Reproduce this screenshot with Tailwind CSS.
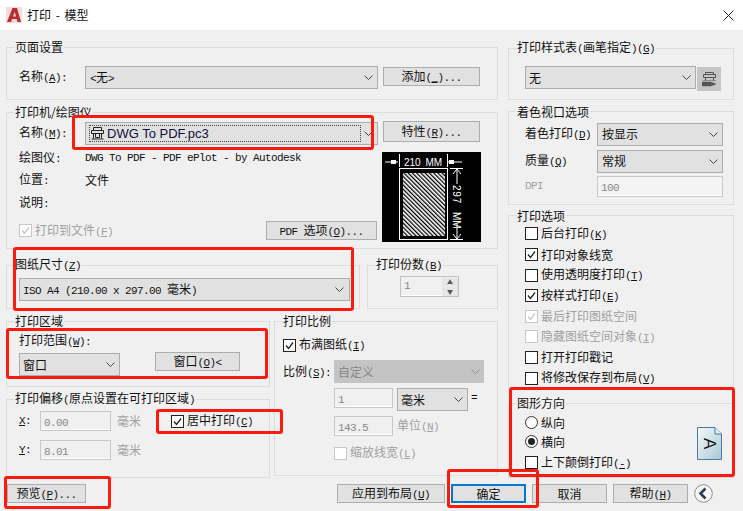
<!DOCTYPE html>
<html lang="zh-CN">
<head>
  <meta charset="UTF-8">
  <title>打印 - 模型</title>
  <script src="https://cdn.jsdelivr.net/npm/@tailwindcss/browser@4"></script>
</head>
<body class="relative w-[743px] h-[511px] overflow-hidden bg-[#f0f0f0] text-[12px] leading-[16px] text-[#111] font-['Noto_Sans_CJK_SC',sans-serif] [&_kbd]:text-[11px] [&_kbd]:tracking-[-0.6px] [&_kbd]:font-['Liberation_Mono',monospace] [&_legend]:px-[1px] [&_legend]:ml-[7px] [&_fieldset]:border [&_fieldset]:border-[#dcdcdc]">
  <svg class="hidden">
    <symbol id="chev" viewBox="0 0 9 5"><path d="M.5.5 4.500 4.500 8.500.5" fill="none" stroke="#444"/></symbol>
    <symbol id="box" viewBox="0 0 13 13"><rect x=".5" y=".5" width="12" height="12" fill="#fff" stroke="currentColor"/></symbol>
    <symbol id="chk" viewBox="0 0 13 13"><rect x=".5" y=".5" width="12" height="12" fill="#fff" stroke="currentColor"/><path d="M3 6.500 5.500 9.500 10 3.500" fill="none" stroke="currentColor" stroke-width="1.300"/></symbol>
    <symbol id="prn" viewBox="0 0 13 13"><path d="M2.500.5h8v3h-8zM.5 3.500h12v3H.5zM2.500 6.500v5M10.500 6.500v5M4.500 6.500v4h4v-4M.5 12h12" fill="none" stroke="currentColor"/></symbol>
    <symbol id="pen" viewBox="0 0 15 15"><path d="M3.500.5h8v2h-8zM1.500 2.500h12v3h-12zM3.500 5.500v3M11.500 5.500v3" fill="none" stroke="currentColor"/><path d="M0 10h9l5 2-5 2H0zM1 8.500h13" fill="currentColor" stroke="currentColor" stroke-width=".5"/></symbol>
  </svg>

  <header class="flex items-center h-[30px] bg-white">
    <svg class="ml-[6px] w-[16px] h-[16px]" viewBox="0 0 16 16">
      <rect width="16" height="16" fill="#f3dcd9"/>
      <path d="M1 15 6.500 1H11L15 15H11.500L10.800 12H6L5 15ZM7 9.500H10L8.800 5Z" fill="#b92c33"/>
    </svg>
    <span class="ml-[5px]">打印<span class="mx-[2px]"> - </span>模型</span>
    <svg class="ml-auto mr-[9px] w-[11px] h-[11px]" viewBox="0 0 11 11"><path d="M.5.5 10.500 10.500M10.500.5.500 10.500" stroke="#222"/></svg>
  </header>

  <main class="h-[481px] pt-[9px] pl-[6px]">
    <div class="flex h-[439px]">
      <div class="w-[492px] flex flex-col">
        <fieldset class="h-[61px]">
          <legend>页面设置</legend>
          <div class="flex pl-[12px] pr-[16px] pt-[11px]">
            <span class="w-[66px] pt-[2px]">名称<kbd>(<u>A</u>):</kbd></span>
            <div class="w-[293px] h-[23px] flex items-center justify-between pl-[4px] pr-[4px] bg-[#e1e1e1] border border-[#adadad]"><span><kbd>&lt;</kbd>无<kbd>&gt;</kbd></span><svg class="w-[9px] h-[5px]"><use href="#chev"/></svg></div>
            <button class="ml-[5px] mt-[1px] w-[97px] h-[19px] bg-[#e1e1e1] border border-[#adadad]">添加<kbd>(<u>_</u>)...</kbd></button>
          </div>
        </fieldset>

        <fieldset class="mt-[4px] h-[145px]">
          <legend>打印机/绘图仪</legend>
          <div class="flex pl-[12px] pr-[16px] pt-[2px]">
            <span class="w-[66px] pt-[2px]">名称<kbd>(<u>M</u>):</kbd></span>
            <div class="w-[293px] h-[23px] flex items-center justify-between pl-[3px] pr-[4px] bg-[#e1e1e1] border border-[#adadad]">
              <span class="flex items-center w-[272px] h-[17px] border border-dotted border-[#444]">
                <svg class="ml-[1px] w-[13px] h-[13px] text-[#222]"><use href="#prn"/></svg>
                <span class="ml-[3px] text-[13px] text-[#10103a] font-['Liberation_Sans']">DWG To PDF.pc3</span>
              </span>
              <svg class="w-[9px] h-[5px]"><use href="#chev"/></svg>
            </div>
            <button class="ml-[5px] -mt-[1px] w-[97px] h-[21px] bg-[#e1e1e1] border border-[#adadad]">特性<kbd>(<u>R</u>)...</kbd></button>
          </div>
          <div class="flex pl-[12px]">
            <div class="w-[358px] pt-[2px]">
              <div class="flex h-[22px] items-center"><span class="w-[66px]">绘图仪<kbd>:</kbd></span><kbd>DWG To PDF - PDF ePlot - by Autodesk</kbd></div>
              <div class="flex h-[22px] items-center"><span class="w-[66px]">位置<kbd>:</kbd></span>文件</div>
              <div class="flex h-[23px] items-center"><span class="w-[66px]">说明<kbd>:</kbd></span></div>
              <div class="flex items-center justify-between mt-[7px] text-[#a0a0a0]">
                <span class="flex items-center gap-[3px]"><svg class="w-[13px] h-[13px] text-[#c8c8c8]"><use href="#chk"/></svg><span>打印到文件<kbd>(<u>F</u>)</kbd></span></span>
                <button class="w-[111px] h-[19px] text-[#111] bg-[#e1e1e1] border border-[#adadad]"><kbd>PDF </kbd>选项<kbd>(<u>O</u>)...</kbd></button>
              </div>
            </div>
            <svg class="ml-[5px] mt-[7px] w-[99px] h-[90px] bg-black" viewBox="0 0 99 90">
              <defs><pattern id="hatch" width="3" height="3" patternUnits="userSpaceOnUse" patternTransform="rotate(45)"><rect width="3" height="1.700" fill="#fff"/></pattern></defs>
              <g stroke="#fff" fill="none">
                <path d="M3 10H16M17.500 2V15M65.500 2V15M66 10H80M68 16.500H81M68 87.500H81M75 17V32M75 72V87"/>
                <rect x="17.500" y="16.500" width="48" height="71"/>
                <path d="M71 22 75 17 79 22M71 82 75 87 79 82"/>
              </g>
              <rect x="21" y="21" width="42" height="63" fill="url(#hatch)"/>
              <path d="M9 8h5v4H9ZM67 8h5v4H67Z" fill="#fff"/>
              <text x="22" y="14" font-size="10" word-spacing="2" fill="#fff" font-family="Liberation Sans">210 MM</text>
              <text transform="translate(71 33) rotate(90)" font-size="10" letter-spacing=".8" fill="#fff" font-family="Liberation Sans">297</text>
              <text transform="translate(71 60) rotate(90)" font-size="10" fill="#fff" font-family="Liberation Sans">MM</text>
            </svg>
          </div>
        </fieldset>

        <div class="flex mt-[7px] gap-[7px]">
          <fieldset class="w-[354px] h-[53px]">
            <legend>图纸尺寸<kbd>(<u>Z</u>)</kbd></legend>
            <div class="pl-[12px] pr-[9px] pt-[4px]">
              <div class="h-[23px] flex items-center justify-between pl-[3px] pr-[5px] bg-[#e1e1e1] border border-[#adadad]"><span><kbd>ISO A4 (210.00 x 297.00 </kbd>毫米<kbd>)</kbd></span><svg class="w-[9px] h-[5px]"><use href="#chev"/></svg></div>
            </div>
          </fieldset>
          <fieldset class="w-[131px] h-[53px]">
            <legend>打印份数<kbd>(<u>B</u>)</kbd></legend>
            <div class="pl-[32px] pt-[2px]">
              <div class="w-[59px] h-[21px] flex border border-[#c0c0c0] bg-[#f0f0f0] shadow-[inset_0_-1px_0_#fff] pl-[3px] pt-[1px] text-[#888]"><kbd class="flex-1">1</kbd>
                <span class="w-[16px] flex flex-col gap-[1px]"><span class="h-[8px] bg-[#e6e6e6] flex items-center justify-center text-[6px] leading-none text-[#555]">▲</span><span class="h-[9px] bg-[#e6e6e6] flex items-center justify-center text-[6px] leading-none text-[#555]">▼</span></span>
              </div>
            </div>
          </fieldset>
        </div>

        <div class="flex mt-[4px] gap-[4px]">
          <div class="w-[264px]">
            <fieldset class="h-[74px]">
              <legend>打印区域</legend>
              <div class="pl-[12px] pt-[3px]">打印范围<kbd>(<u>W</u>):</kbd></div>
              <div class="flex pl-[12px] pt-[3px]">
                <div class="w-[101px] h-[23px] flex items-center justify-between pl-[3px] pr-[4px] bg-[#e1e1e1] border border-[#adadad]">窗口<svg class="w-[9px] h-[5px]"><use href="#chev"/></svg></div>
                <button class="ml-[35px] -mt-[1px] w-[85px] h-[19px] bg-[#e1e1e1] border border-[#adadad]">窗口<kbd>(<u>O</u>)&lt;</kbd></button>
              </div>
            </fieldset>
            <fieldset class="mt-[3px] h-[88px]">
              <legend>打印偏移<kbd>(</kbd>原点设置在可打印区域<kbd>)</kbd></legend>
              <div class="flex items-center pl-[12px] pt-[3px]">
                <kbd class="w-[21px]"><u>X</u>:</kbd>
                <span class="w-[71px] h-[20px] pl-[3px] leading-[18px] bg-[#f0f0f0] border border-[#c8c8c8] shadow-[inset_0_-1px_0_#fff] text-[#888]"><kbd>0.00</kbd></span>
                <span class="ml-[6px] w-[54px] text-[#a0a0a0]">毫米</span>
                <svg class="w-[13px] h-[13px] text-[#222]"><use href="#chk"/></svg><span class="ml-[3px]">居中打印<kbd>(<u>C</u>)</kbd></span>
              </div>
              <div class="flex items-center pl-[12px] pt-[9px]">
                <kbd class="w-[21px]"><u>Y</u>:</kbd>
                <span class="w-[71px] h-[20px] pl-[3px] leading-[18px] bg-[#f0f0f0] border border-[#c8c8c8] shadow-[inset_0_-1px_0_#fff] text-[#888]"><kbd>8.01</kbd></span>
                <span class="ml-[6px] text-[#a0a0a0]">毫米</span>
              </div>
            </fieldset>
          </div>
          <fieldset class="w-[224px] h-[163px]">
            <legend>打印比例</legend>
            <div class="flex items-center pl-[8px] pt-[7px]"><svg class="w-[13px] h-[13px] text-[#222]"><use href="#chk"/></svg><span class="ml-[3px]">布满图纸<kbd>(<u>I</u>)</kbd></span></div>
            <div class="flex items-center pl-[8px] pt-[6px]">
              <span class="w-[51px]">比例<kbd>(<u>S</u>):</kbd></span>
              <div class="w-[150px] h-[23px] flex items-center justify-between pl-[4px] pr-[4px] bg-[#c4c4c4] text-[#888]">自定义<svg class="w-[9px] h-[5px] opacity-40"><use href="#chev"/></svg></div>
            </div>
            <div class="flex pl-[59px] pt-[5px] h-[28px]">
              <span class="w-[59px] h-[20px] pl-[3px] leading-[18px] bg-[#f0f0f0] border border-[#c8c8c8] shadow-[inset_0_-1px_0_#fff] text-[#888]"><kbd>1</kbd></span>
              <div class="ml-[4px] w-[71px] h-[23px] flex items-center justify-between pl-[3px] pr-[4px] bg-[#e1e1e1] border border-[#adadad]">毫米<svg class="w-[9px] h-[5px]"><use href="#chev"/></svg></div>
              <kbd class="ml-[3px] leading-[20px]">=</kbd>
            </div>
            <div class="flex items-center pl-[59px] pt-[5px]">
              <span class="w-[59px] h-[20px] pl-[3px] leading-[18px] bg-[#f0f0f0] border border-[#c8c8c8] shadow-[inset_0_-1px_0_#fff] text-[#888]"><kbd>143.5</kbd></span>
              <span class="ml-[4px] text-[#a0a0a0]">单位<kbd>(<u>N</u>)</kbd></span>
            </div>
            <div class="flex items-center pl-[59px] pt-[8px] text-[#a0a0a0]"><svg class="w-[13px] h-[13px] text-[#c8c8c8]"><use href="#box"/></svg><span class="ml-[3px]">缩放线宽<kbd>(<u>L</u>)</kbd></span></div>
          </fieldset>
        </div>
      </div>

      <div class="ml-[10px] w-[226px] flex flex-col">
        <fieldset class="h-[61px]">
          <legend>打印样式表<kbd>(</kbd>画笔指定<kbd>)(<u>G</u>)</kbd></legend>
          <div class="flex pl-[16px] pt-[9px]">
            <div class="w-[171px] h-[23px] flex items-center justify-between pl-[3px] pr-[4px] bg-[#e1e1e1] border border-[#adadad]">无<svg class="w-[9px] h-[5px]"><use href="#chev"/></svg></div>
            <span class="ml-[1px] mt-[1px] w-[24px] h-[24px] flex items-center justify-center bg-[#c6c6c6]"><svg class="w-[15px] h-[15px] text-[#555]"><use href="#pen"/></svg></span>
          </div>
        </fieldset>

        <fieldset class="mt-[4px] h-[101px]">
          <legend>着色视口选项</legend>
          <div class="flex items-center pl-[16px] pt-[3px]">
            <span class="w-[72px]">着色打印<kbd>(<u>D</u>)</kbd></span>
            <div class="w-[126px] h-[23px] flex items-center justify-between pl-[4px] pr-[4px] bg-[#e1e1e1] border border-[#adadad]">按显示<svg class="w-[9px] h-[5px]"><use href="#chev"/></svg></div>
          </div>
          <div class="flex items-center pl-[16px] pt-[4px]">
            <span class="w-[72px]">质量<kbd>(<u>Q</u>)</kbd></span>
            <div class="w-[126px] h-[23px] flex items-center justify-between pl-[4px] pr-[4px] bg-[#e1e1e1] border border-[#adadad]">常规<svg class="w-[9px] h-[5px]"><use href="#chev"/></svg></div>
          </div>
          <div class="flex items-center pl-[16px] pt-[3px] text-[#a0a0a0]">
            <kbd class="w-[72px]">DPI</kbd>
            <span class="w-[126px] h-[21px] pl-[3px] leading-[18px] bg-[#f4f4f4] border border-[#c8c8c8] shadow-[inset_0_-1px_0_#fff] text-[#888]"><kbd>100</kbd></span>
          </div>
        </fieldset>

        <fieldset class="mt-[3px] h-[183px]">
          <legend>打印选项</legend>
          <div class="pl-[16px] [&>div]:h-[20.600px] [&>div]:flex [&>div]:items-center [&>div]:gap-[3px]">
            <div><svg class="w-[13px] h-[13px] text-[#222]"><use href="#box"/></svg><span>后台打印<kbd>(<u>K</u>)</kbd></span></div>
            <div><svg class="w-[13px] h-[13px] text-[#222]"><use href="#chk"/></svg><span>打印对象线宽</span></div>
            <div><svg class="w-[13px] h-[13px] text-[#222]"><use href="#box"/></svg><span>使用透明度打印<kbd>(<u>T</u>)</kbd></span></div>
            <div><svg class="w-[13px] h-[13px] text-[#222]"><use href="#chk"/></svg><span>按样式打印<kbd>(<u>E</u>)</kbd></span></div>
            <div class="text-[#a0a0a0]"><svg class="w-[13px] h-[13px] text-[#c8c8c8]"><use href="#chk"/></svg><span>最后打印图纸空间</span></div>
            <div class="text-[#a0a0a0]"><svg class="w-[13px] h-[13px] text-[#c8c8c8]"><use href="#box"/></svg><span>隐藏图纸空间对象<kbd>(<u>I</u>)</kbd></span></div>
            <div><svg class="w-[13px] h-[13px] text-[#222]"><use href="#box"/></svg><span>打开打印戳记</span></div>
            <div><svg class="w-[13px] h-[13px] text-[#222]"><use href="#box"/></svg><span>将修改保存到布局<kbd>(<u>V</u>)</kbd></span></div>
          </div>
        </fieldset>

        <fieldset class="mt-[5px] h-[83px]">
          <legend>图形方向</legend>
          <div class="flex pl-[16px]">
            <div class="flex-1 pt-[2px]">
              <div class="flex items-center gap-[3px] h-[19px]"><span class="w-[13px] h-[13px] rounded-full border border-[#333] bg-white"></span>纵向</div>
              <div class="flex items-center gap-[3px] h-[19px]"><span class="w-[13px] h-[13px] rounded-full border border-[#333] bg-white flex items-center justify-center"><span class="w-[7px] h-[7px] rounded-full bg-[#222]"></span></span>横向</div>
              <div class="flex items-center gap-[3px] h-[23px]"><svg class="w-[13px] h-[13px] text-[#222]"><use href="#box"/></svg><span>上下颠倒打印<kbd>(<u>-</u>)</kbd></span></div>
            </div>
            <svg class="mr-[11px] mt-[16px] w-[25px] h-[33px]" viewBox="0 0 25 33">
              <defs><linearGradient id="page" x1="0" y1="0" x2="1" y2="1"><stop offset="0" stop-color="#f4fafa"/><stop offset="1" stop-color="#a9c8d2"/></linearGradient></defs>
              <path d="M.5.5H18L24.500 7V32.500H.5Z" fill="url(#page)" stroke="#4a7ba8"/>
              <path d="M18 .5V7H24.500" fill="#dfeef2" stroke="#4a7ba8"/>
              <text transform="translate(7 11) rotate(90)" font-size="17" fill="#111" font-family="Liberation Sans">A</text>
            </svg>
          </div>
        </fieldset>
      </div>
    </div>

    <footer class="flex items-center mt-[6px] pl-[1px] [&_button]:h-[19px] [&_button]:bg-[#e1e1e1] [&_button]:border [&_button]:border-[#adadad]">
      <button class="w-[79px]">预览<kbd>(<u>P</u>)...</kbd></button>
      <button class="ml-[251px] w-[108px]">应用到布局<kbd>(<u>U</u>)</kbd></button>
      <button class="ml-[6px] w-[75px] !border-2 !border-[#0078d7]">确定</button>
      <button class="ml-[6px] w-[75px]">取消</button>
      <button class="ml-[6px] w-[75px]">帮助<kbd>(<u>H</u>)</kbd></button>
      <svg class="ml-[6px] w-[19px] h-[19px]" viewBox="0 0 19 19"><circle cx="9.500" cy="9.500" r="8.800" fill="#f7f7f7" stroke="#8a8a8a"/><path d="M11.500 4.500 6.500 9.500 11.500 14.500" fill="none" stroke="#2c3e55" stroke-width="2.600"/></svg>
    </footer>
  </main>

  <!-- red annotation boxes drawn over the dialog -->
  <div class="absolute left-[72px] top-[115px] w-[302px] h-[35px] border-[3px] border-[#fb1a0e] rounded-[3px]"></div>
  <div class="absolute left-[13px] top-[247px] w-[341px] h-[64px] border-[3px] border-[#fb1a0e] rounded-[3px]"></div>
  <div class="absolute left-[6px] top-[328px] w-[262px] h-[51px] border-[3px] border-[#fb1a0e] rounded-[3px]"></div>
  <div class="absolute left-[156px] top-[409px] w-[127px] h-[25px] border-[3px] border-[#fb1a0e] rounded-[3px]"></div>
  <div class="absolute left-[4px] top-[476px] w-[107px] h-[33px] border-[3px] border-[#fb1a0e] rounded-[3px]"></div>
  <div class="absolute left-[447px] top-[469px] w-[92px] h-[39px] border-[3px] border-[#fb1a0e] rounded-[3px]"></div>
  <div class="absolute left-[509px] top-[387px] w-[226px] h-[90px] border-[3px] border-[#fb1a0e] rounded-[3px]"></div>
</body>
</html>
